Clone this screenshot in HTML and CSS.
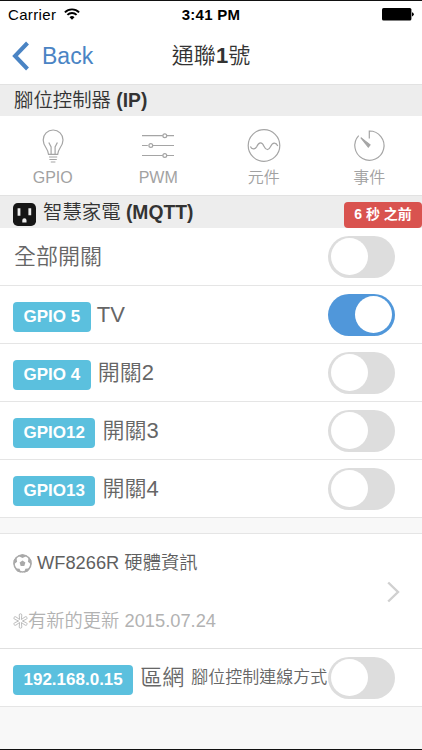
FILE: index.html
```html
<!DOCTYPE html>
<html lang="zh-Hant">
<head>
<meta charset="utf-8">
<title>通聯1號</title>
<link rel="stylesheet" href="styles.css">
</head>
<body>
<div class="app">
  <div class="status">
    <div class="carrier"><span>Carrier</span>
      <svg width="16" height="12" viewBox="0 0 16 12" fill="none" stroke="#000" stroke-width="1.9"><path d="M.9 4.3A10 10 0 0 1 15.1 4.3M3.4 6.9A6.5 6.5 0 0 1 12.6 6.9"/><path d="M8 11.8 5.5 9.2a3.6 3.6 0 0 1 5 0Z" fill="#000" stroke="none"/></svg>
    </div>
    <b class="time">3:41 PM</b>
    <svg class="battery" width="32" height="13" viewBox="0 0 32 13"><rect width="29.4" height="12.6" rx="1.6" fill="#000"/><path d="M30 4.2q1.8.5 1.8 2.1T30 8.4Z" fill="#000"/></svg>
  </div>
  <header class="nav">
    <div class="back"><svg width="18" height="30" viewBox="0 0 18 30" fill="none" stroke="#4a84c4" stroke-width="4"><path d="M15.5 2 3 15 15.5 28"/></svg><span>Back</span></div>
    <h1>通聯<b>1</b>號</h1>
    <div></div>
  </header>
  <div class="section"><span class="section-title">腳位控制器 <b>(IP)</b></span></div>
  <nav class="tabs">
    <div class="tab">
      <svg width="34" height="34" viewBox="0 0 34 34"><path d="M12.5 25.3c0-5.6-5.3-7.8-5.3-14.4a9.9 9.9 0 0 1 19.8 0c0 6.6-5.3 8.8-5.3 14.4ZM15.1 25V18l-2.3-4.5M19.1 25V18l2.3-4.5M13 28h8.2M13.4 30.5h7.4M14.8 33h4.6"/></svg>
      <span>GPIO</span>
    </div>
    <div class="tab">
      <svg width="34" height="34" viewBox="0 0 34 34"><path d="M1 6.7h20.8M26 6.7h7M1 16.5h5.8M12 16.5h21M1 26.5h20.8M26 26.5h7"/><circle cx="23.8" cy="6.7" r="1.9"/><circle cx="9.8" cy="16.5" r="1.9"/><circle cx="23.8" cy="26.5" r="1.9"/></svg>
      <span>PWM</span>
    </div>
    <div class="tab">
      <svg width="34" height="34" viewBox="0 0 34 34"><circle cx="17" cy="16.5" r="15.8"/><path d="M3.4 17.4c1.2 2.8 4.5 3.6 6.4.2 2.1-4.8 5.2-5.2 7.3 0 1.7 3.8 4.7 4 6.5 0 2-4.4 5.3-4.6 7.2-.6"/></svg>
      <span>元件</span>
    </div>
    <div class="tab">
      <svg width="34" height="34" viewBox="0 0 34 34"><path d="M17.3 9.5V2A14.6 14.6 0 1 1 6.7 6.7"/><path d="m8.8 8.6 9.2 7.3-1.7 2.2Z" fill="#a5a5a5"/></svg>
      <span>事件</span>
    </div>
  </nav>
  <div class="section mqtt">
    <svg width="23" height="23" viewBox="0 0 23 23"><rect width="23" height="23" rx="4.8" fill="#161616"/><path d="M4.6 5.2h2.8v7.6H4.6zM15.4 5.2h2.8v7h-2.8zM9.3 19.6v-2.3a2.1 2.1 0 0 1 4.2 0v2.3Z" fill="#eee"/></svg>
    <span class="section-title">智慧家電 <b>(MQTT)</b></span>
    <span class="ago">6 秒 之前</span>
  </div>
  <main>
    <div class="row first"><span class="name">全部開關</span><i class="toggle"></i></div>
    <div class="row"><span class="badge">GPIO 5</span><span class="name tv">TV</span><i class="toggle on"></i></div>
    <div class="row"><span class="badge">GPIO 4</span><span class="name">開關2</span><i class="toggle"></i></div>
    <div class="row"><span class="badge">GPIO12</span><span class="name">開關3</span><i class="toggle"></i></div>
    <div class="row"><span class="badge">GPIO13</span><span class="name">開關4</span><i class="toggle"></i></div>
    <div class="gap"></div>
    <div class="info">
      <div class="info-text">
        <div class="device">
          <svg width="19" height="19" viewBox="0 0 19 19"><circle cx="9.5" cy="9.5" r="8.5" fill="#fff" stroke="#a9a9a9" stroke-width="1.5"/><path d="m9.5 6.5 2.9 2.1-1.1 3.4H7.7L6.6 8.6ZM4.8 1.8 9.5 4 14.2 1.8 9.5.3ZM.5 10.8l3.6-3L3.2 2.8.5 6.5ZM18.5 10.8l-3.6-3 .9-5 2.7 3.7ZM2 14.2l4.6.6 1.4 4-3.8-1.2ZM17 14.2l-4.6.6-1.4 4 3.8-1.2Z" fill="#a9a9a9"/></svg>
          <span>WF8266R 硬體資訊</span>
        </div>
        <div class="update">
          <svg width="15" height="16" viewBox="0 0 15 16" fill="none" stroke="#b5b5b5" stroke-width=".9" stroke-linejoin="round"><path d="M6.6 6.5 6.2 2Q6.2.8 7.5.8T8.8 2L8.4 6.5 12.2 3.8q1.1-.5 1.7.5t-.3 1.8L9.4 8l4.2 1.9q.9.8.3 1.8t-1.7.5L8.4 9.5 8.8 14q0 1.2-1.3 1.2T6.2 14l.4-4.5-3.8 2.7q-1.1.5-1.7-.5t.3-1.8L5.6 8 1.4 6.1Q.5 5.3 1.1 4.3t1.7-.5Z"/></svg>
          <span>有新的更新 2015.07.24</span>
        </div>
      </div>
      <svg class="chevron" width="13" height="22" viewBox="0 0 13 22" fill="none" stroke="#d0d0d0" stroke-width="2.4"><path d="m1.2 1.5 9.8 9.5-9.8 9.5"/></svg>
    </div>
    <div class="row lan"><span class="badge">192.168.0.15</span><span class="name">區網</span><span class="small">腳位控制連線方式</span><i class="toggle"></i></div>
  </main>
</div>
</body>
</html>
```
FILE: styles.css
```css
* { box-sizing: border-box; }
body {
  margin: 0;
  background: #f8f8f8;
  color: #666;
  font-family: "Liberation Sans", "Noto Sans CJK TC", sans-serif;
  font-weight: 350;
}
b { font-weight: 700; }
svg { display: block; flex: none; }
.app {
  height: 750px;
  overflow: hidden;
  border-top: 1px solid #111;
  border-bottom: 1px solid #111;
  white-space: nowrap;
}
.status {
  display: grid;
  grid-template-columns: 1fr auto 1fr;
  align-items: center;
  height: 27px;
  padding: 0 8px 0 8px;
  background: #fff;
  color: #000;
  font-size: 15px;
}
.time { letter-spacing: .25px; }
.carrier { display: flex; align-items: center; gap: 8px; letter-spacing: .35px; }
.carrier svg { margin-top: -2px; }
.battery { justify-self: end; }
.nav {
  display: grid;
  grid-template-columns: 1fr auto 1fr;
  align-items: center;
  height: 56px;
  background: #fff;
}
.back {
  display: flex;
  align-items: center;
  gap: 12px;
  padding-left: 12px;
  color: #4a84c4;
  font-size: 23px;
}
.nav h1 {
  margin: 0;
  color: #333;
  font-size: 22px;
  font-weight: 350;
  line-height: 30px;
}
.section {
  display: flex;
  align-items: center;
  height: 32px;
  padding: 0 0 1px 14px;
  border-top: 1px solid #e2e2e2;
  background: #ededed;
  color: #333;
  font-size: 19.4px;
  line-height: 28px;
}
.section b { font-size: 19.3px; }
.tabs {
  display: grid;
  grid-template-columns: repeat(4, 1fr);
  height: 79px;
  background: #fff;
}
.tab {
  display: flex;
  flex-direction: column;
  align-items: center;
  gap: 4px;
  padding-top: 13px;
  color: #a2a2a2;
  font-size: 16px;
  line-height: 22px;
}
.tab svg { fill: none; stroke: #a5a5a5; stroke-width: 1.2; }
.mqtt { gap: 7px; height: 33px; padding: 0 0 0 13px; }
.mqtt svg { margin-top: 5px; }
.ago {
  width: 78px;
  height: 26px;
  margin: 6px 0 0 auto;
  border-radius: 4px;
  background: #d9534f;
  color: #fff;
  font-size: 14px;
  font-weight: 700;
  line-height: 24px;
  text-align: center;
}
.row {
  display: flex;
  align-items: center;
  height: 58px;
  padding: 0 27px 0 13px;
  border-bottom: 1px solid #e5e5e5;
  background: #fff;
}
.name { font-size: 22px; line-height: 32px; margin-left: 7px; }
.badge + .tv { margin-left: 6px; }
.first .name { margin-left: 1px; }
.badge {
  height: 30px;
  margin-top: 5px;
  padding: 0 10.5px;
  border-radius: 4px;
  background: #5bc0de;
  color: #fff;
  font-size: 17px;
  font-weight: 700;
  line-height: 29px;
}
.toggle {
  flex: none;
  width: 67px;
  height: 42px;
  margin-left: auto;
  padding: 2px 3px;
  border-radius: 21px;
  background: #ddd;
}
.toggle::before {
  content: "";
  display: block;
  width: 37px;
  height: 37px;
  border-radius: 50%;
  background: #fff;
}
.toggle.on { background: #5097da; }
.toggle.on::before { margin-left: auto; }
.gap { height: 16px; border-bottom: 1px solid #e5e5e5; }
.info {
  display: flex;
  align-items: center;
  justify-content: space-between;
  height: 115px;
  padding: 2px 22px 0 13px;
  border-bottom: 1px solid #e0e0e0;
  background: #fff;
}
.info-text { display: grid; gap: 30px; font-size: 18.3px; line-height: 28px; }
.device, .update { display: flex; align-items: center; }
.device { gap: 5px; color: #5f5f5f; }
.update { color: #b2b2b2; }
.lan .small { margin-left: 7px; font-size: 17px; line-height: 26px; }
```
